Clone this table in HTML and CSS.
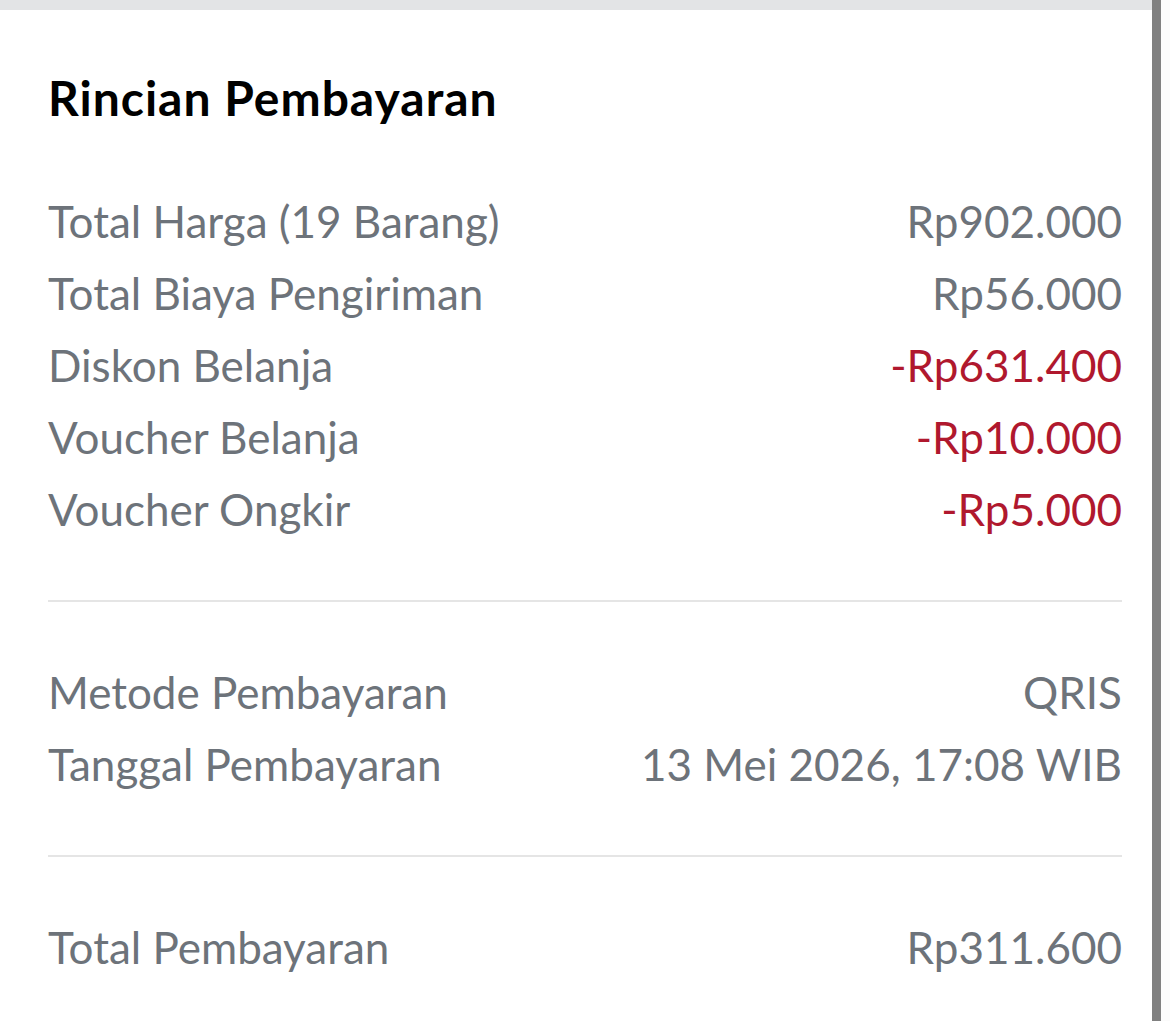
FILE: index.html
```html
<!DOCTYPE html>
<html lang="id">
<head>
  <meta charset="UTF-8">
  <title>Rincian Pembayaran</title>
  <link rel="stylesheet" href="styles.css">
</head>
<body>

<div class="screen">
  <div class="content">
    <div class="top-strip"></div>

    <div class="card">
      <h1>Rincian Pembayaran</h1>

      <div class="group">
        <div class="row"><span>Total Harga (19 Barang)</span><span>Rp902.000</span></div>
        <div class="row"><span>Total Biaya Pengiriman</span><span>Rp56.000</span></div>
        <div class="row"><span>Diskon Belanja</span><span class="minus">-Rp631.400</span></div>
        <div class="row"><span>Voucher Belanja</span><span class="minus">-Rp10.000</span></div>
        <div class="row"><span>Voucher Ongkir</span><span class="minus">-Rp5.000</span></div>
      </div>

      <div class="group">
        <div class="row"><span>Metode Pembayaran</span><span>QRIS</span></div>
        <div class="row"><span>Tanggal Pembayaran</span><span>13 Mei 2026, 17:08 WIB</span></div>
      </div>

      <div class="group">
        <div class="row"><span>Total Pembayaran</span><span>Rp311.600</span></div>
      </div>
    </div>
  </div>

  <div class="scrollbar"></div>
  <div class="gutter"></div>
</div>

</body>
</html>
```

FILE: styles.css
```css
body {
  margin: 0;
  font-family: Lato, "Noto Sans", Arial, sans-serif;
  background-color: #ffffff;
}
.screen {
  display: flex;
  height: 1021px;
  overflow: hidden;
}
.content {
  flex: 1;
}
.top-strip {
  height: 10px;
  background-color: #e3e4e6;
}
.scrollbar {
  width: 9px;
  background-color: #808080;
}
.gutter {
  width: 9px;
  background-color: #fbfbfb;
}
.card {
  padding: 0 30px 0 48px;
}
h1 {
  margin: 0;
  padding: 62px 0 61px;
  font-size: 48px;
  line-height: 52px;
  letter-spacing: 1px;
  font-weight: 700;
  color: #000000;
}
.group {
  padding: 0 0 55px;
  border-bottom: 2px solid #e5e5e5;
  margin-bottom: 54px;
}
.group:last-child {
  border-bottom: none;
}
.row {
  display: flex;
  justify-content: space-between;
  height: 72px;
  line-height: 72px;
  font-size: 44px;
  color: #6d737a;
}
.minus {
  color: #b0182e;
}
```
